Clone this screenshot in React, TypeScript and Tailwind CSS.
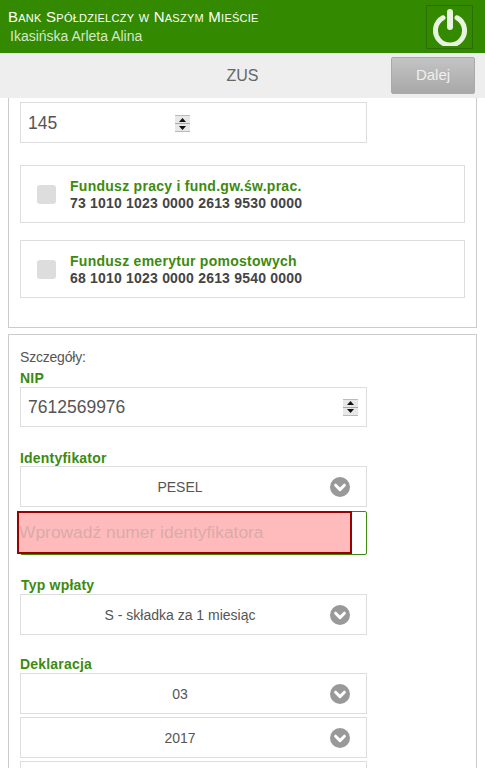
import React from 'react';

const font = "font-['Liberation_Sans',Arial,sans-serif]";

const Spinner = () => (
  <span className="flex h-[17px] w-[15px] flex-col border-y border-[#bbb] bg-[#e8e8e8]">
    <span className="flex flex-1 items-center justify-center border-b border-[#aaa]">
      <svg width="7" height="4" viewBox="0 0 7 4"><path d="M3.5 0 7 4H0z" fill="#111" /></svg>
    </span>
    <span className="flex flex-1 items-center justify-center">
      <svg width="7" height="4" viewBox="0 0 7 4"><path d="M0 0h7L3.5 4z" fill="#111" /></svg>
    </span>
  </span>
);

const Chevron = () => (
  <svg width="20" height="20" viewBox="0 0 20 20" className="absolute right-[16px] top-1/2 -translate-y-1/2">
    <circle cx="10" cy="10" r="10" fill="#999" />
    <path d="M5.6 8.2 10 12.6l4.4-4.4" fill="none" stroke="#fff" strokeWidth="3" strokeLinecap="round" strokeLinejoin="round" />
  </svg>
);

const Select = ({ value, className = '' }: { value: string; className?: string }) => (
  <div className={`relative flex h-[41px] w-[347px] items-center justify-center border border-[#ddd] bg-white pr-[27px] text-sm text-[#555] ${className}`}>
    {value}
    <Chevron />
  </div>
);

const Label = ({ children, className = '' }: { children: React.ReactNode; className?: string }) => (
  <div className={`text-sm font-bold leading-4 tracking-[0.2px] text-[#3d8a10] ${className}`}>{children}</div>
);

const Fund = ({ name, account, className = '' }: { name: string; account: string; className?: string }) => (
  <div className={`flex h-[58px] w-[445px] items-center border border-[#ddd] bg-white ${className}`}>
    <span className="ml-4 mr-[14px] h-[19px] w-[19px] rounded-[3px] bg-[#ddd]" />
    <div className="pt-0.5 text-sm font-bold leading-[17px]">
      <div className="tracking-[0.27px] text-[#3d8a10]">{name}</div>
      <div className="tracking-[0.2px] text-[#444]">{account}</div>
    </div>
  </div>
);

export default function App() {
  return (
    <div className={`h-[768px] w-[485px] overflow-hidden bg-white ${font}`}>
      <header className="flex h-[53px] items-center justify-between bg-[#338a00] pl-2 pr-[12px]">
        <div className="text-white">
          <div className="text-[15px] leading-[17px] tracking-[0.25px] [font-variant:small-caps]">Bank Spółdzielczy w Naszym Mieście</div>
          <div className="ml-0.5 mt-[3px] text-sm leading-[17px] text-[#d5e8c8]">Ikasińska Arleta Alina</div>
        </div>
        <button className="flex h-[44px] w-[47px] items-center justify-center border border-[#2a6f00] bg-[#338a00]">
          <svg width="36" height="38" viewBox="0 0 36 38" fill="none" stroke="#e8f4e0">
            <path d="M11 9.8a14.5 14.5 0 1 0 14 0" strokeWidth="5" strokeLinecap="round" />
            <path d="M18 4v15" strokeWidth="6" strokeLinecap="round" />
          </svg>
        </button>
      </header>

      <div className="relative flex h-[45px] items-center justify-center bg-[#eeeeee] text-base text-[#666]">
        ZUS
        <button className="absolute right-[10px] top-[4px] h-[37px] w-[84px] rounded-[2px] border border-[#aaa] bg-gradient-to-b from-[#c4c4c4] to-[#a8a8a8] text-[15px] text-[#f0f0f0]">
          Dalej
        </button>
      </div>

      <section className="mx-2 h-[230px] border-x border-b border-[#ccc] px-[11px] pt-1">
        <div className="flex h-[41px] w-[347px] items-center border border-[#ddd] bg-white pl-[7px] pt-0.5 text-[17.5px] text-[#555]">
          <span className="w-[147px]">145</span>
          <Spinner />
        </div>
        <Fund className="mt-[22px]" name="Fundusz pracy i fund.gw.św.prac." account="73 1010 1023 0000 2613 9530 0000" />
        <Fund className="mt-[17px]" name="Fundusz emerytur pomostowych" account="68 1010 1023 0000 2613 9540 0000" />
      </section>

      <section className="mx-2 mt-[6px] h-[500px] border border-[#ccc] px-[11px] pt-[14px]">
        <div className="text-sm leading-4 tracking-[-0.2px] text-[#555]">Szczegóły:</div>
        <Label className="mt-[5px]">NIP</Label>
        <div className="mt-px flex h-[40px] w-[347px] items-center justify-between border border-[#ddd] bg-white pl-[7px] pr-2 text-[17.5px] text-[#555]">
          7612569976
          <Spinner />
        </div>
        <Label className="mt-[23px]">Identyfikator</Label>
        <Select value="PESEL" />
        <div className="relative mt-[4px] h-[44px] w-[347px] rounded-[2px] border border-[#3d8a10] bg-white">
          <div className="absolute -left-[4px] -top-px flex h-[43px] w-[335px] items-center border-[2px] border-[#990000] bg-[#ffbbbb] text-[17.4px] text-[#d8abab]">
            Wprowadź numer identyfikatora
          </div>
        </div>
        <Label className="ml-px mt-[22px]">Typ wpłaty</Label>
        <Select className="mt-[1px]" value="S - składka za 1 miesiąc" />
        <Label className="mt-[21px]">Deklaracja</Label>
        <Select className="mt-[1px]" value="03" />
        <Select className="mt-[3px]" value="2017" />
        <Select className="mt-[3px]" value="" />
      </section>
    </div>
  );
}
